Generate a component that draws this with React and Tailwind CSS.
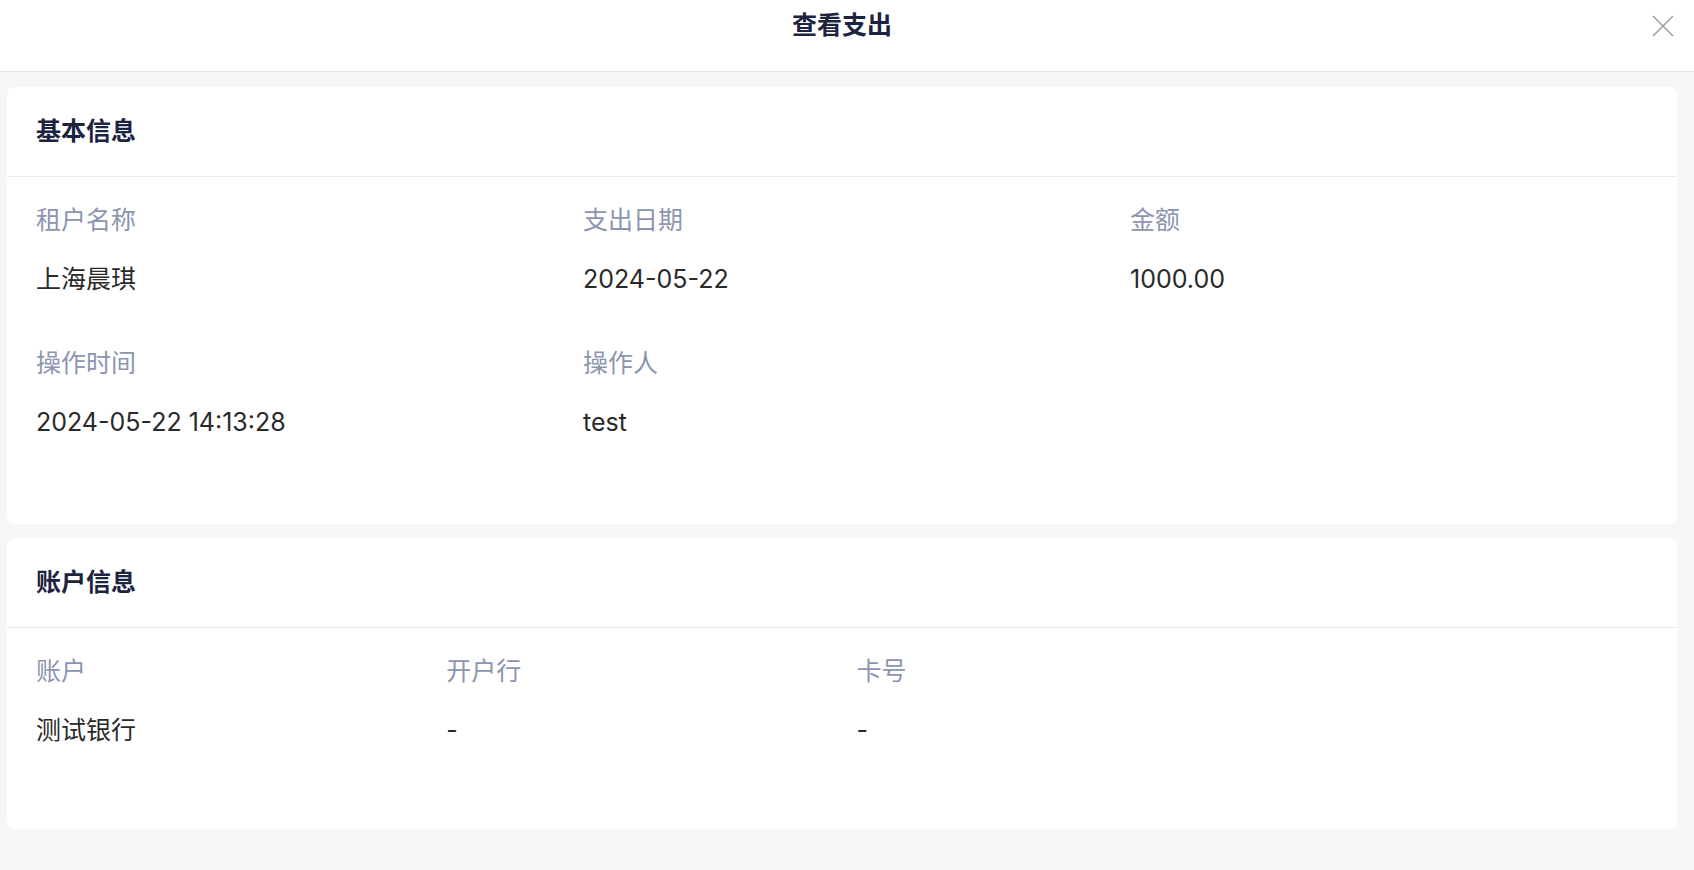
const basic = [
  { label: "租户名称", value: "上海晨琪" },
  { label: "支出日期", value: "2024-05-22" },
  { label: "金额", value: "1000.00" },
  { label: "操作时间", value: "2024-05-22 14:13:28" },
  { label: "操作人", value: "test" },
];

const account = [
  { label: "账户", value: "测试银行" },
  { label: "开户行", value: "-" },
  { label: "卡号", value: "-" },
];

function Field({ label, value }) {
  return (
    <div className="mb-[54px]">
      <div className="text-[25px] leading-[30px] text-[#8c95b0]">{label}</div>
      <div className="mt-[29px] text-[25px] leading-[30px] text-[#2a2a2a]">{value}</div>
    </div>
  );
}

function Card({ title, children }) {
  return (
    <section className="rounded-lg bg-white">
      <div className="flex h-[90px] items-center border-b border-[#ebebeb] pl-[29px]">
        <h2 className="text-[25px] font-semibold text-[#1c2340]">{title}</h2>
      </div>
      {children}
    </section>
  );
}

export default function App() {
  return (
    <div
      className="min-h-[870px] bg-[#f7f7f7]"
      style={{ fontFamily: 'Inter, "Noto Sans CJK SC", sans-serif' }}
    >
      <header className="relative h-[72px] border-b border-[#e6e6e6] bg-white">
        <h1 className="pr-[10px] pt-[10px] text-center text-[25px] font-semibold leading-[30px] text-[#1c2340]">
          查看支出
        </h1>
        <button
          type="button"
          aria-label="关闭"
          className="absolute right-[20px] top-[15px] text-[#9a9a9a]"
        >
          <svg width="22" height="22" viewBox="0 0 22 22" fill="none" stroke="currentColor" strokeWidth="1.4">
            <path d="M1 1L21 21M21 1L1 21" />
          </svg>
        </button>
      </header>

      <main className="flex flex-col gap-[14px] pb-[41px] pl-[7px] pr-[17px] pt-[15px]">
        <Card title="基本信息">
          <div className="grid grid-cols-3 pb-[33px] pl-[29px] pt-[28px]">
            {basic.map((f) => (
              <Field key={f.label} {...f} />
            ))}
          </div>
        </Card>
        <Card title="账户信息">
          <div className="grid grid-cols-4 pb-[30px] pl-[29px] pt-[28px]">
            {account.map((f) => (
              <Field key={f.label} {...f} />
            ))}
          </div>
        </Card>
      </main>
    </div>
  );
}
